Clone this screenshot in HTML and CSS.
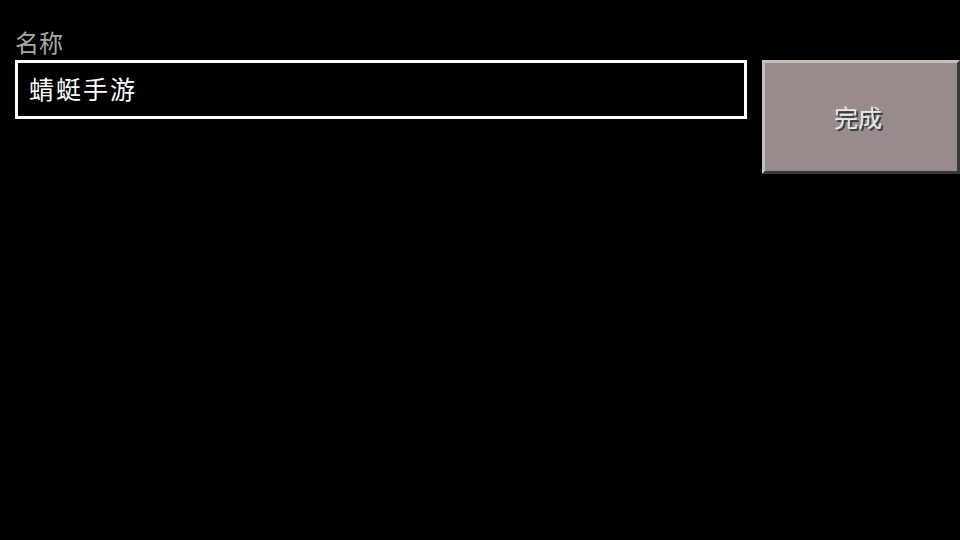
FILE: index.html
```html
<!DOCTYPE html>
<html lang="zh-CN">
<head>
<meta charset="utf-8">
<title>名称</title>
<link rel="stylesheet" href="styles.css">
</head>
<body>
<div class="screen">
  <div class="field">
    <div class="label">名称</div>
    <div class="input">蜻蜓手游</div>
  </div>
  <div class="button"><span class="button-text">完成</span></div>
</div>
</body>
</html>
```
FILE: styles.css
```css
html, body {
  margin: 0;
  padding: 0;
  background: #000;
  width: 960px;
  height: 540px;
  overflow: hidden;
}
.screen {
  display: flex;
  align-items: flex-start;
  gap: 15px;
  padding: 28px 0 0 15px;
  font-family: "Noto Sans CJK SC", "Noto Sans", sans-serif;
}
.field {
  width: 732px;
  display: flex;
  flex-direction: column;
}
.label {
  height: 32px;
  font-size: 24px;
  line-height: 28px;
  color: #a8a8a8;
}
.input {
  box-sizing: border-box;
  height: 59px;
  border: 3px solid #ffffff;
  padding: 0 12px 4px 11px;
  display: flex;
  align-items: center;
  font-size: 25px;
  letter-spacing: 2px;
  color: #ffffff;
  background: #000;
}
.button {
  box-sizing: border-box;
  margin-top: 32px;
  width: 198px;
  height: 114px;
  background: #978c8b;
  border-top: 3px solid #c7bebc;
  border-left: 3px solid #c7bebc;
  border-bottom: 3px solid #383838;
  border-right: 3px solid #383838;
  display: flex;
  align-items: center;
  justify-content: center;
}
.button-text {
  font-size: 24px;
  line-height: 24px;
  color: #e8e8e8;
  text-shadow: 2px 2px 0 #3a3a3a;
  margin-left: -6px;
}
```
